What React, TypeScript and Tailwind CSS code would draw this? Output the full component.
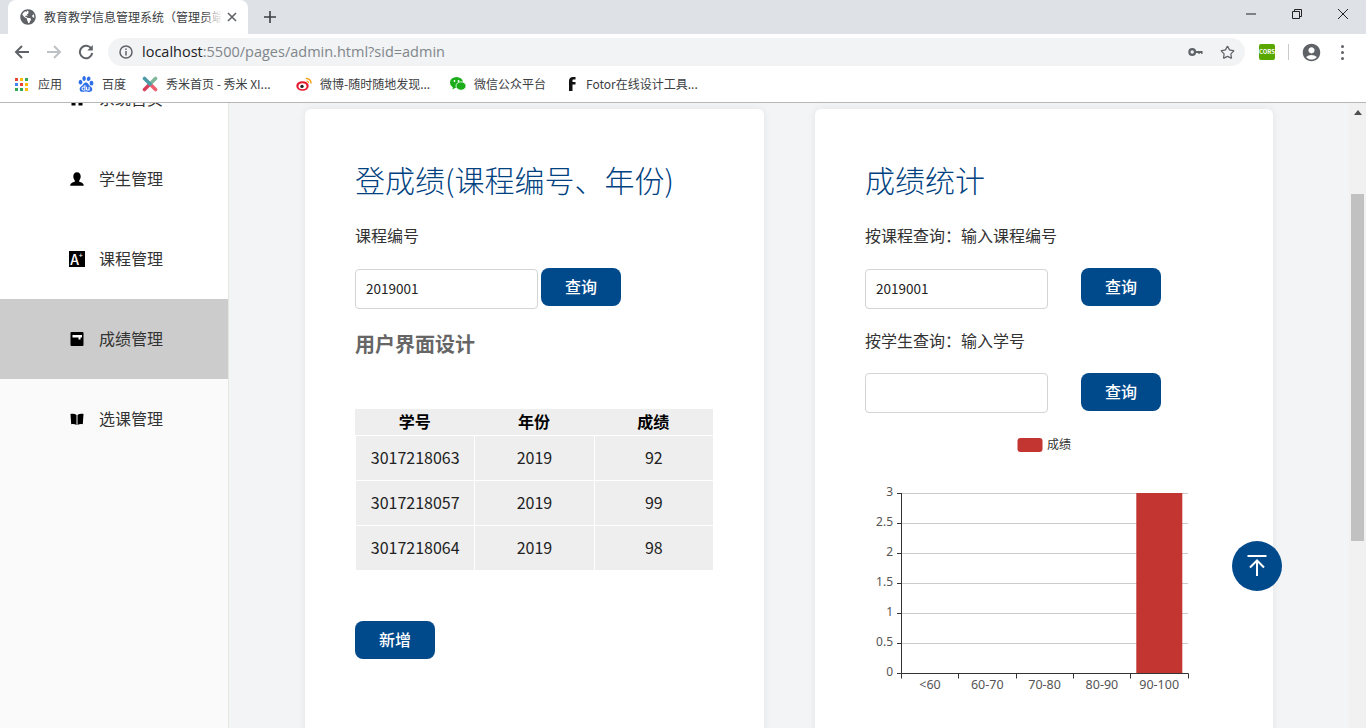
import { FaGlobeAmericas } from 'react-icons/fa';
import { SiBaidu } from 'react-icons/si';
import { MdAccountCircle } from 'react-icons/md';
import { Star } from 'lucide-react';

const HomeIcon = () => (
  <svg viewBox="0 0 16 16" className="w-4 h-4 shrink-0">
    <path d="M8 1 L15 7.5 H13.5 V14.5 H9.5 V10 H6.5 V14.5 H2.5 V7.5 H1 Z" fill="#000" />
  </svg>
);

const PersonIcon = () => (
  <svg viewBox="1.5 1.5 13 12" className="w-4 h-4 shrink-0">
    <path d="M8 2 C10 2 11 3.5 11 5.5 C11 7 10.4 8 9.8 8.8 V9.8 C11.5 10.4 13.5 10.8 13.5 13 H2.5 C2.5 10.8 4.500 10.4 6.200 9.800 V8.800 C5.600 8 5 7 5 5.500 C5 3.500 6 2 8 2 Z" fill="#000" />
  </svg>
);

const GradeIcon = () => (
  <svg viewBox="0 0 16 16" className="w-4 h-4 shrink-0">
    <rect x="1.500" y="1" width="13" height="14" rx="1" fill="#000" />
    <path d="M3.500 4 H13 V6.500 H11.500 V8.500 H9.500 V6.500 H3.500 Z" fill="#fff" />
  </svg>
);

const BookIcon = () => (
  <svg viewBox="0 0 16 16" className="w-4 h-4 shrink-0">
    <path d="M1.500 3 C4 2.500 6 2.800 7.500 4 V14 C6 13 4 12.800 2.200 13.200 Z" fill="#000" />
    <path d="M14.500 3 C12 2.500 10 2.800 8.500 4 V14 C10 13 12 12.800 13.800 13.200 Z" fill="#000" />
  </svg>
);

const CourseIcon = () => (
  <div className="w-4 h-4 shrink-0 bg-black flex items-center justify-center text-white text-[14px] leading-none font-medium pr-[1px]">
    A<span className="text-[7px] -mt-2">+</span>
  </div>
);

const menu = [
  { label: '系统首页', icon: <HomeIcon />, cls: 'bg-white' },
  { label: '学生管理', icon: <PersonIcon />, cls: 'bg-white' },
  { label: '课程管理', icon: <CourseIcon />, cls: 'bg-white' },
  { label: '成绩管理', icon: <GradeIcon />, cls: 'bg-[#cccccc]' },
  { label: '选课管理', icon: <BookIcon />, cls: 'bg-[#fafafa]' },
];

const grades = [
  ['3017218063', '2019', '92'],
  ['3017218057', '2019', '99'],
  ['3017218064', '2019', '98'],
];

const Btn = ({ text, className = '' }: { text: string; className?: string }) => (
  <button className={`w-20 h-[38px] pb-[2px] rounded-lg bg-[#004a8c] text-white text-base font-medium ${className}`}>{text}</button>
);

const Field = ({ value }: { value: string }) => (
  <input
    readOnly
    value={value}
    className="w-[183px] h-10 px-[10px] pb-[3px] border border-[#d4d4d4] rounded-[4px] bg-white text-[13.5px] text-[#222] outline-none"
  />
);

const XiumiIcon = () => (
  <svg viewBox="0 0 16 16" className="w-4 h-4">
    <path d="M8 8 L13.500 13.500" stroke="#ef5f6f" strokeWidth="3.600" strokeLinecap="round" />
    <path d="M8 8 L2.500 13.500" stroke="#d6405c" strokeWidth="3.600" strokeLinecap="round" />
    <path d="M13.500 2.500 L8 8" stroke="#7fb79a" strokeWidth="3.600" strokeLinecap="round" />
    <path d="M2.500 2.500 L8 8" stroke="#4b9aa5" strokeWidth="3.600" strokeLinecap="round" />
  </svg>
);

const WeiboIcon = () => (
  <svg viewBox="0 0 16 16" className="w-4 h-4">
    <ellipse cx="6.500" cy="10" rx="6.200" ry="4.800" fill="#e6162d" />
    <ellipse cx="6.500" cy="10.300" rx="4" ry="3" fill="#fff" />
    <circle cx="6" cy="10.400" r="1.700" fill="#222" />
    <path d="M10 2.500 A4.500 4.500 0 0 1 15 7.500" stroke="#f39c12" strokeWidth="1.400" fill="none" />
    <path d="M10.500 5 A2 2 0 0 1 12.500 7" stroke="#f39c12" strokeWidth="1.200" fill="none" />
  </svg>
);

const WechatIcon = () => (
  <svg viewBox="0 0 16 16" className="w-4 h-4">
    <ellipse cx="6.500" cy="6.500" rx="6.500" ry="5.500" fill="#1aad19" />
    <path d="M3 10 L2.500 13.500 L6 11.500 Z" fill="#1aad19" />
    <ellipse cx="11" cy="10" rx="5" ry="4.200" fill="#1aad19" stroke="#fff" strokeWidth="0.800" />
    <circle cx="4.500" cy="5" r="0.900" fill="#fff" />
    <circle cx="8.500" cy="5" r="0.900" fill="#fff" />
  </svg>
);

const AppsIcon = () => {
  const colors = ['#ea4335', '#fbbc05', '#34a853', '#4285f4', '#ea4335', '#fbbc05', '#34a853', '#34a853', '#fbbc05'];
  return (
    <div className="grid grid-cols-3 gap-[2px] w-[13px] h-[13px]">
      {colors.map((c, i) => (
        <span key={i} className="w-[3px] h-[3px]" style={{ background: c }} />
      ))}
    </div>
  );
};

const bookmarks = [
  { icon: <AppsIcon />, text: '应用', cls: 'w-[63px] gap-[10px]' },
  { icon: <SiBaidu className="w-4 h-4 text-[#2f6fe8]" />, text: '百度', cls: 'w-[64px] gap-2' },
  { icon: <XiumiIcon />, text: '秀米首页 - 秀米 XI...', cls: 'w-[154px] gap-2' },
  { icon: <WeiboIcon />, text: '微博-随时随地发现...', cls: 'w-[154px] gap-2' },
  { icon: <WechatIcon />, text: '微信公众平台', cls: 'w-[116px] gap-2' },
  {
    icon: (
      <svg viewBox="0 0 16 16" className="w-4 h-4">
        <path d="M3 15 V5 C3 2.500 4.500 1 7 1 H9.500 V3.500 H7.500 C6.800 3.500 6.500 3.800 6.500 4.500 V6 H9.500 V8.500 H6.500 V15 Z" fill="#111" />
      </svg>
    ),
    text: 'Fotor在线设计工具...',
    cls: 'gap-1',
  },
];

export default function App() {
  return (
    <div className="relative w-full h-[728px] overflow-hidden bg-white flex flex-col font-['Noto_Sans_CJK_SC',sans-serif]">
      {/* tab strip */}
      <div className="h-[34px] bg-[#dee1e6] flex items-center shrink-0">
        <div className="relative ml-2 w-[240px] h-[34px] bg-white rounded-t-lg flex items-center pl-3 overflow-hidden">
          <FaGlobeAmericas className="w-4 h-4 text-[#5f6368] shrink-0" />
          <span className="ml-2 w-[178px] overflow-hidden whitespace-nowrap text-[12px] text-[#3c4043]">
            教育教学信息管理系统（管理员端）
          </span>
          <div className="absolute left-[196px] top-0 h-full w-[18px] bg-gradient-to-r from-transparent to-white" />
          <svg viewBox="0 0 10 10" className="absolute left-[219px] top-[12px] w-[10px] h-[10px]">
            <path d="M1 1 L9 9 M9 1 L1 9" stroke="#5f6368" strokeWidth="1.600" />
          </svg>
        </div>
        <svg viewBox="0 0 12 12" className="ml-4 w-3 h-3">
          <path d="M6 0 V12 M0 6 H12" stroke="#3c4043" strokeWidth="1.600" />
        </svg>
        <div className="flex-1" />
        <svg viewBox="0 0 10 10" className="w-[10px] h-[10px] mr-[36px] mb-[6px]">
          <path d="M0 5 H10" stroke="#222" strokeWidth="1" />
        </svg>
        <svg viewBox="0 0 10 10" className="w-[10px] h-[10px] mr-[36px] mb-[6px]">
          <path d="M2.500 2.500 V0.500 H9.500 V7.500 H7.500 M0.500 2.500 H7.500 V9.500 H0.500 Z" stroke="#222" strokeWidth="1" fill="none" />
        </svg>
        <svg viewBox="0 0 10 10" className="w-[10px] h-[10px] mr-[18px] mb-[6px]">
          <path d="M0 0 L10 10 M10 0 L0 10" stroke="#222" strokeWidth="1" />
        </svg>
      </div>

      {/* toolbar */}
      <div className="h-[34px] bg-white flex items-center shrink-0 pl-[14px] pt-[2px]">
        <svg viewBox="0 0 16 16" className="w-4 h-4">
          <path d="M15 8 H2 M8 2 L2 8 L8 14" stroke="#5f6368" strokeWidth="2" fill="none" />
        </svg>
        <svg viewBox="0 0 16 16" className="ml-4 w-4 h-4">
          <path d="M1 8 H14 M8 2 L14 8 L8 14" stroke="#bdc1c6" strokeWidth="2" fill="none" />
        </svg>
        <svg viewBox="0 0 16 16" className="ml-4 w-4 h-4">
          <path d="M13.500 5 A6.200 6.200 0 1 0 14.200 9" stroke="#5f6368" strokeWidth="2" fill="none" />
          <path d="M14.800 1 V6.500 H9.300 Z" fill="#5f6368" />
        </svg>
        <div className="ml-[14px] w-[1137px] h-[28px] rounded-full bg-[#f1f3f4] flex items-center pl-[11px] pr-[10px]">
          <svg viewBox="0 0 14 14" className="w-[14px] h-[14px]">
            <circle cx="7" cy="7" r="6" stroke="#5f6368" strokeWidth="1.500" fill="none" />
            <path d="M7 6 V10.500 M7 3.500 V5" stroke="#5f6368" strokeWidth="1.500" />
          </svg>
          <span className="ml-[9px] text-[14.5px] whitespace-nowrap text-[#80868b] font-['Open_Sans',sans-serif]">
            <span className="text-[#202124]">localhost</span>:5500/pages/admin.html?sid=admin
          </span>
          <div className="flex-1" />
          <svg viewBox="0 0 16 10" className="w-[15px] h-[10px]">
            <circle cx="4.500" cy="5" r="3" stroke="#5f6368" strokeWidth="2.400" fill="none" />
            <path d="M7 4 H15.500 V7 H14 V6 H12.500 V7 H11 V6 H7 Z" fill="#5f6368" />
          </svg>
          <Star className="ml-[17px] w-[15px] h-[15px] text-[#5f6368]" strokeWidth={2} />
        </div>
        <div className="ml-[14px] w-4 h-4 rounded-[2px] bg-[#5aa700] flex items-center justify-center text-[6px] font-bold leading-none text-white">
          CORS
        </div>
        <div className="ml-[13px] w-px h-4 bg-[#c8cacd]" />
        <MdAccountCircle className="ml-[12px] w-[21px] h-[21px] text-[#5f6368]" />
        <div className="ml-[19px] flex flex-col gap-[3px]">
          <span className="w-[3px] h-[3px] rounded-full bg-[#5f6368]" />
          <span className="w-[3px] h-[3px] rounded-full bg-[#5f6368]" />
          <span className="w-[3px] h-[3px] rounded-full bg-[#5f6368]" />
        </div>
      </div>

      {/* bookmarks */}
      <div className="h-[35px] bg-white border-b border-[#b7b7b7] flex items-center shrink-0 pl-[15px] pb-[2px]">
        {bookmarks.map(b => (
          <div key={b.text} className={`flex items-center shrink-0 ${b.cls}`}>
            {b.icon}
            <span className="text-[12px] text-[#3c4043] whitespace-nowrap">{b.text}</span>
          </div>
        ))}
      </div>

      {/* page */}
      <div className="flex-1 min-h-0 flex">
        <div className="w-[229px] shrink-0 border-r border-[#e2e8e2] bg-[#fafafa] overflow-hidden">
          <div className="-mt-[44px]">
            {menu.map(m => (
              <div key={m.label} className={`h-20 flex items-center pl-[69px] gap-[14px] text-base text-[#333] ${m.cls}`}>
                {m.icon}
                <span className="mb-[2px]">{m.label}</span>
              </div>
            ))}
          </div>
        </div>

        <div className="flex-1 min-w-0 bg-[#f3f4f6] overflow-hidden flex items-start gap-[51px] pl-[76px] pt-[6px]">
          {/* left card */}
          <div className="w-[459px] h-[700px] shrink-0 bg-white rounded-md shadow-[0_0_8px_rgba(0,0,0,0.07)] pl-[50px] pt-[50px]">
            <h2 className="text-[30px] leading-[44px] font-light text-[#00427f] -mt-[2px]">登成绩(课程编号、年份)</h2>
            <p className="mt-[22px] text-base leading-6 text-[#333]">课程编号</p>
            <div className="mt-[21px] flex items-start gap-[3px]">
              <div className="pt-px"><Field value="2019001" /></div>
              <Btn text="查询" />
            </div>
            <h3 className="mt-[19px] text-[20px] leading-[32px] font-bold text-[#666]">用户界面设计</h3>
            <div className="mt-[49px] w-[358px]">
              <div className="grid grid-cols-3 h-[26px] bg-[#eeeeee] text-base font-bold text-black text-center leading-[24px]">
                <span>学号</span>
                <span>年份</span>
                <span>成绩</span>
              </div>
              {grades.map(row => (
                <div key={row[0]} className="mt-px pl-px grid grid-cols-3 gap-px h-11 text-base text-[#222] text-center">
                  {row.map((c, i) => (
                    <span key={i} className="bg-[#eeeeee] leading-[42px]">{c}</span>
                  ))}
                </div>
              ))}
            </div>
            <Btn text="新增" className="mt-[51px]" />
          </div>

          {/* right card */}
          <div className="w-[458px] h-[700px] shrink-0 bg-white rounded-md shadow-[0_0_8px_rgba(0,0,0,0.07)] pl-[50px] pt-[50px]">
            <h2 className="text-[30px] leading-[44px] font-light text-[#00427f] -mt-[2px]">成绩统计</h2>
            <p className="mt-[22px] text-base leading-6 text-[#333]">按课程查询：输入课程编号</p>
            <div className="mt-[21px] flex items-start gap-[33px]">
              <div className="pt-px"><Field value="2019001" /></div>
              <Btn text="查询" />
            </div>
            <p className="mt-[19px] text-base leading-6 text-[#333]">按学生查询：输入学号</p>
            <div className="mt-[21px] flex items-start gap-[33px]">
              <Field value="" />
              <Btn text="查询" />
            </div>
            <svg viewBox="865 430 340 265" className="block mt-[17px] w-[340px] h-[265px] font-['Noto_Sans','Noto_Sans_CJK_SC',sans-serif]">
              <rect x="1017.500" y="438" width="25" height="14" rx="3" fill="#c23531" />
              <text x="1047" y="444" dominantBaseline="central" className="text-[12px] fill-[#333]">成绩</text>
              {[493, 523, 553, 583, 613, 643].map(y => (
                <path key={y} d={`M901.500 ${y + 0.5} H1188`} stroke="#ccc" strokeWidth="1" />
              ))}
              <rect x="1136.300" y="493" width="46" height="180" fill="#c23531" />
              <path d="M901.500 493 V673.500 H1188.500" stroke="#333" strokeWidth="1" fill="none" />
              {[493, 523, 553, 583, 613, 643, 673].map(y => (
                <path key={y} d={`M897 ${y + 0.5} H901.500`} stroke="#333" strokeWidth="1" />
              ))}
              {[901.5, 958.5, 1016.5, 1073.5, 1130.5, 1188.5].map(x => (
                <path key={x} d={`M${x} 673.500 V678.500`} stroke="#333" strokeWidth="1" />
              ))}
              {['3', '2.5', '2', '1.5', '1', '0.5', '0'].map((t, i) => (
                <text key={t} x="893" y={491.5 + i * 30} textAnchor="end" dominantBaseline="central" className="text-[12px] fill-[#555]">{t}</text>
              ))}
              {['<60', '60-70', '70-80', '80-90', '90-100'].map((t, i) => (
                <text key={t} x={930 + i * 57.3} y="684.500" textAnchor="middle" dominantBaseline="central" className="text-[12.5px] fill-[#555]">{t}</text>
              ))}
            </svg>
          </div>
        </div>

        {/* scrollbar */}
        <div className="w-[17px] shrink-0 bg-[#f1f1f1] flex flex-col items-center">
          <svg viewBox="0 0 8 5" className="mt-[7px] w-2 h-[5px]">
            <path d="M4 0 L8 5 H0 Z" fill="#505050" />
          </svg>
          <div className="mt-[79px] w-[13px] h-[347px] bg-[#c1c1c1]" />
        </div>
      </div>

      {/* back to top */}
      <div className="absolute left-[1232px] top-[541px] w-[50px] h-[50px] rounded-full bg-[#004a8c] flex items-center justify-center">
        <svg viewBox="0 0 20 22" className="w-5 h-[22px]">
          <path d="M0.500 1 H19.500 M10 21 V6 M3 12.500 L10 5.500 L17 12.500" stroke="#fff" strokeWidth="2" fill="none" />
        </svg>
      </div>
    </div>
  );
}
